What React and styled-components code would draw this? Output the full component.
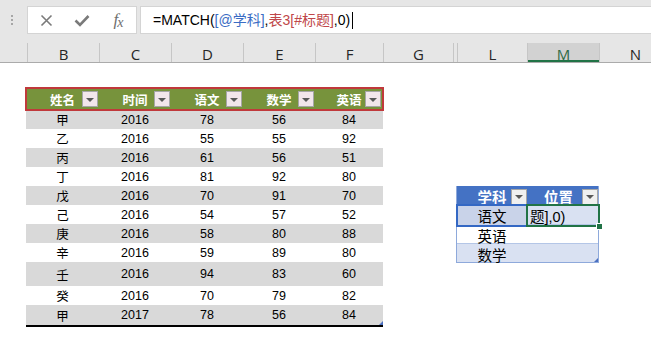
import React from "react";
import styled, { createGlobalStyle } from "styled-components";

const GlobalStyle = createGlobalStyle`
  html, body {
    margin: 0;
    padding: 0;
    background: #fff;
    overflow: hidden;
  }
  body {
    font-family: "Liberation Sans", "Noto Sans CJK SC", sans-serif;
  }
`;

const columns = [
  { id: "corner", label: "", width: 27 },
  { id: "B", label: "B", width: 72 },
  { id: "C", label: "C", width: 72 },
  { id: "D", label: "D", width: 72 },
  { id: "E", label: "E", width: 72 },
  { id: "F", label: "F", width: 68 },
  { id: "G", label: "G", width: 70 },
  { id: "hidden", label: "", width: 4 },
  { id: "L", label: "L", width: 70 },
  { id: "M", label: "M", width: 72, selected: true },
  { id: "N", label: "N", width: 72 },
];

const scoreHeaders = ["姓名", "时间", "语文", "数学", "英语"];

const scoreRows = [
  ["甲", 2016, 78, 56, 84],
  ["乙", 2016, 55, 55, 92],
  ["丙", 2016, 61, 56, 51],
  ["丁", 2016, 81, 92, 80],
  ["戊", 2016, 70, 91, 70],
  ["己", 2016, 54, 57, 52],
  ["庚", 2016, 58, 80, 88],
  ["辛", 2016, 59, 89, 80],
  ["壬", 2016, 94, 83, 60, true],
  ["癸", 2016, 70, 79, 82],
  ["甲", 2017, 78, 56, 84],
];

const Page = styled.div`
  width: 651px;
  height: 345px;
  display: flex;
  flex-direction: column;
  background: #fff;
`;

/* formula bar */
const FormulaBar = styled.div`
  height: 43px;
  box-sizing: border-box;
  padding-top: 6px;
  background: #e6e6e6;
  display: flex;
  align-items: flex-start;
`;

const Grip = styled.div`
  width: 27px;
  height: 28px;
  display: flex;
  flex-direction: column;
  align-items: center;
  justify-content: center;
  gap: 2px;
  padding-right: 3px;
  box-sizing: border-box;
`;

const GripDot = styled.span`
  width: 2px;
  height: 2px;
  background: #a6a6a6;
`;

const IconBox = styled.div`
  width: 110px;
  height: 28px;
  box-sizing: border-box;
  background: #fff;
  border: 1px solid #d4d4d4;
  display: grid;
  grid-template-columns: repeat(3, 1fr);
  align-items: center;
  justify-items: center;
  color: #7a7a7a;
`;

const FxLabel = styled.span`
  font-family: "Liberation Serif", serif;
  font-style: italic;
  font-size: 17px;
  color: #6f6f6f;
  letter-spacing: -1px;
  line-height: 1;

  sub {
    font-size: 14px;
    vertical-align: -2px;
  }
`;

const FormulaInput = styled.div`
  flex: 1;
  margin-left: 3px;
  height: 28px;
  box-sizing: border-box;
  background: #fff;
  border: 1px solid #d4d4d4;
  border-right: none;
  padding-left: 12px;
  font-size: 14px;
  line-height: 26px;
  color: #000;
  white-space: nowrap;
  display: flex;
  align-items: center;
`;

const Token = styled.span`
  color: ${(p) => (p.$tone === "blue" ? "#3a6cc4" : p.$tone === "red" ? "#c0474a" : "#000")};
`;

const Caret = styled.span`
  display: inline-block;
  width: 1px;
  height: 17px;
  margin-left: 2px;
  background: #000;
`;

/* column headers */
const HeaderStrip = styled.div`
  height: 20px;
  box-sizing: border-box;
  display: flex;
  background: #e6e6e6;
  border-bottom: 1px solid #ababab;
`;

const ColHead = styled.div`
  flex: 0 0 ${(p) => p.$width}px;
  box-sizing: border-box;
  border-left: ${(p) => (p.$first ? "none" : "1px solid #c6c6c6")};
  display: flex;
  align-items: center;
  justify-content: center;
  padding-top: 2px;
  font-family: "Open Sans", "Liberation Sans", sans-serif;
  font-size: 15px;
  color: ${(p) => (p.$selected ? "#2f6a45" : "#262626")};
  background: ${(p) => (p.$selected ? "#d2d2d2" : "transparent")};
  box-shadow: ${(p) => (p.$selected ? "inset 0 -2px 0 #217346" : "none")};
`;

/* sheet */
const Sheet = styled.div`
  flex: 1;
  display: flex;
  align-items: flex-start;
`;

const ScoreTable = styled.div`
  position: relative;
  margin: 25px 0 0 26px;
  width: 357px;
  font-size: 12.5px;
`;

const ScoreRow = styled.div`
  display: grid;
  grid-template-columns: 73px 72px 72px 72px 68px;
  height: ${(p) => p.$height}px;
  align-items: center;
  background: ${(p) => (p.$band ? "#d9d9d9" : "#fff")};
  border-bottom: ${(p) => (p.$last ? "2px solid #000" : "none")};
`;

const ScoreHeadRow = styled(ScoreRow)`
  position: relative;
  z-index: 1;
  height: 22px;
  background: #77933c;
  outline: 2px solid #c0393b;
  outline-offset: -1px;
`;

const HeadCell = styled.div`
  position: relative;
  height: 100%;
  display: flex;
  align-items: center;
  justify-content: center;
  color: #fff;
  font-weight: bold;
  font-size: ${(p) => p.$size || 12.5}px;
`;

const HeadLabel = styled.span`
  margin-right: ${(p) => p.$shift || 0}px;
`;

const FilterButton = styled.span`
  position: absolute;
  right: ${(p) => p.$right}px;
  top: 50%;
  transform: translateY(-50%);
  width: 16px;
  height: 16px;
  box-sizing: border-box;
  background: ${(p) => p.$bg};
  border: 1px solid #a6a6a6;
  display: flex;
  align-items: center;
  justify-content: center;

  &::after {
    content: "";
    border-left: 4px solid transparent;
    border-right: 4px solid transparent;
    border-top: 4px solid #595959;
    margin-top: 1px;
  }
`;

const DataCell = styled.div`
  text-align: center;
  color: #000;
`;

const ResizeHandle = styled.span`
  position: absolute;
  right: 0;
  bottom: ${(p) => p.$bottom}px;
  width: 4px;
  height: 4px;
  background: #4a6fc0;
  clip-path: polygon(100% 0, 100% 100%, 0 100%);
`;

const LookupTable = styled.div`
  position: relative;
  margin: 123px 0 0 73px;
  width: 143px;
  box-sizing: border-box;
  border: 1px solid #8ea9db;
  border-top: none;
  font-size: 14.5px;
`;

const LookupRow = styled.div`
  display: grid;
  grid-template-columns: 70px 72px;
  height: 19px;
  align-items: stretch;
  background: ${(p) => (p.$band ? "#d9e1f2" : "#fff")};
  border-top: ${(p) => (p.$first ? "none" : "1px solid #b4c6e7")};
  box-sizing: border-box;
`;

const LookupHead = styled(LookupRow)`
  background: #4472c4;
  border-top: none;
`;

const LookupCell = styled.div`
  position: relative;
  display: flex;
  align-items: center;
  justify-content: ${(p) => (p.$left ? "flex-start" : "center")};
  padding-left: ${(p) => (p.$left ? 3 : 0)}px;
  color: #000;
  background: ${(p) => (p.$picked ? "#c9d3e9" : "transparent")};
  outline: ${(p) =>
    p.$active ? "2px solid #217346" : p.$picked ? "2px solid #3468c4" : "none"};
  outline-offset: -1px;
  z-index: ${(p) => (p.$active || p.$picked ? 1 : 0)};

  ${(p) =>
    p.$active &&
    `
    &::after {
      content: "";
      position: absolute;
      right: -4px;
      bottom: -4px;
      width: 5px;
      height: 5px;
      background: #217346;
      border: 1px solid #fff;
    }
  `}
`;

const XIcon = () => (
  <svg width="13" height="13" viewBox="0 0 13 13">
    <path d="M1.5 1.5 L11.5 11.5 M11.5 1.5 L1.5 11.5" stroke="#7a7a7a" strokeWidth="1.6" fill="none" />
  </svg>
);

const CheckIcon = () => (
  <svg width="16" height="13" viewBox="0 0 16 13">
    <path d="M1.5 6.5 L6 11 L14.5 2" stroke="#7a7a7a" strokeWidth="2.6" fill="none" />
  </svg>
);

const App = () => {
  return (
    <Page>
      <GlobalStyle />
      <FormulaBar>
        <Grip>
          <GripDot />
          <GripDot />
          <GripDot />
        </Grip>
        <IconBox>
          <XIcon />
          <CheckIcon />
          <FxLabel>
            f<sub>x</sub>
          </FxLabel>
        </IconBox>
        <FormulaInput>
          <Token>=MATCH(</Token>
          <Token $tone="blue">[@学科]</Token>
          <Token>,</Token>
          <Token $tone="red">表3[#标题]</Token>
          <Token>,0)</Token>
          <Caret />
        </FormulaInput>
      </FormulaBar>

      <HeaderStrip>
        {columns.map((col, i) => (
          <ColHead key={col.id} $width={col.width} $first={i === 0} $selected={col.selected}>
            {col.label}
          </ColHead>
        ))}
      </HeaderStrip>

      <Sheet>
        <ScoreTable>
          <ScoreHeadRow>
            {scoreHeaders.map((h, i) => (
              <HeadCell key={h}>
                {h}
                <FilterButton $right={i === 4 ? 2 : 1} $bg="#f2e6eb" />
              </HeadCell>
            ))}
          </ScoreHeadRow>
          {scoreRows.map((row, i) => {
            const last = i === scoreRows.length - 1;
            const height = row[5] ? 24 : last ? 20 : 19;
            return (
              <ScoreRow key={i} $band={i % 2 === 0} $height={height} $last={last}>
                {row.slice(0, 5).map((v, j) => (
                  <DataCell key={j}>{v}</DataCell>
                ))}
              </ScoreRow>
            );
          })}
          <ResizeHandle $bottom={2} />
        </ScoreTable>

        <LookupTable>
          <LookupHead $first>
            <HeadCell $size={14.5}>
              <HeadLabel>学科</HeadLabel>
              <FilterButton $right={0} $bg="#f0f0f0" />
            </HeadCell>
            <HeadCell $size={14.5}>
              <HeadLabel $shift={9}>位置</HeadLabel>
              <FilterButton $right={1} $bg="#f0f0f0" />
            </HeadCell>
          </LookupHead>
          <LookupRow $band $first>
            <LookupCell $picked>语文</LookupCell>
            <LookupCell $active $left>
              题],0)
            </LookupCell>
          </LookupRow>
          <LookupRow>
            <LookupCell>英语</LookupCell>
            <LookupCell />
          </LookupRow>
          <LookupRow $band>
            <LookupCell>数学</LookupCell>
            <LookupCell />
          </LookupRow>
          <ResizeHandle $bottom={0} />
        </LookupTable>
      </Sheet>
    </Page>
  );
};

export default App;
